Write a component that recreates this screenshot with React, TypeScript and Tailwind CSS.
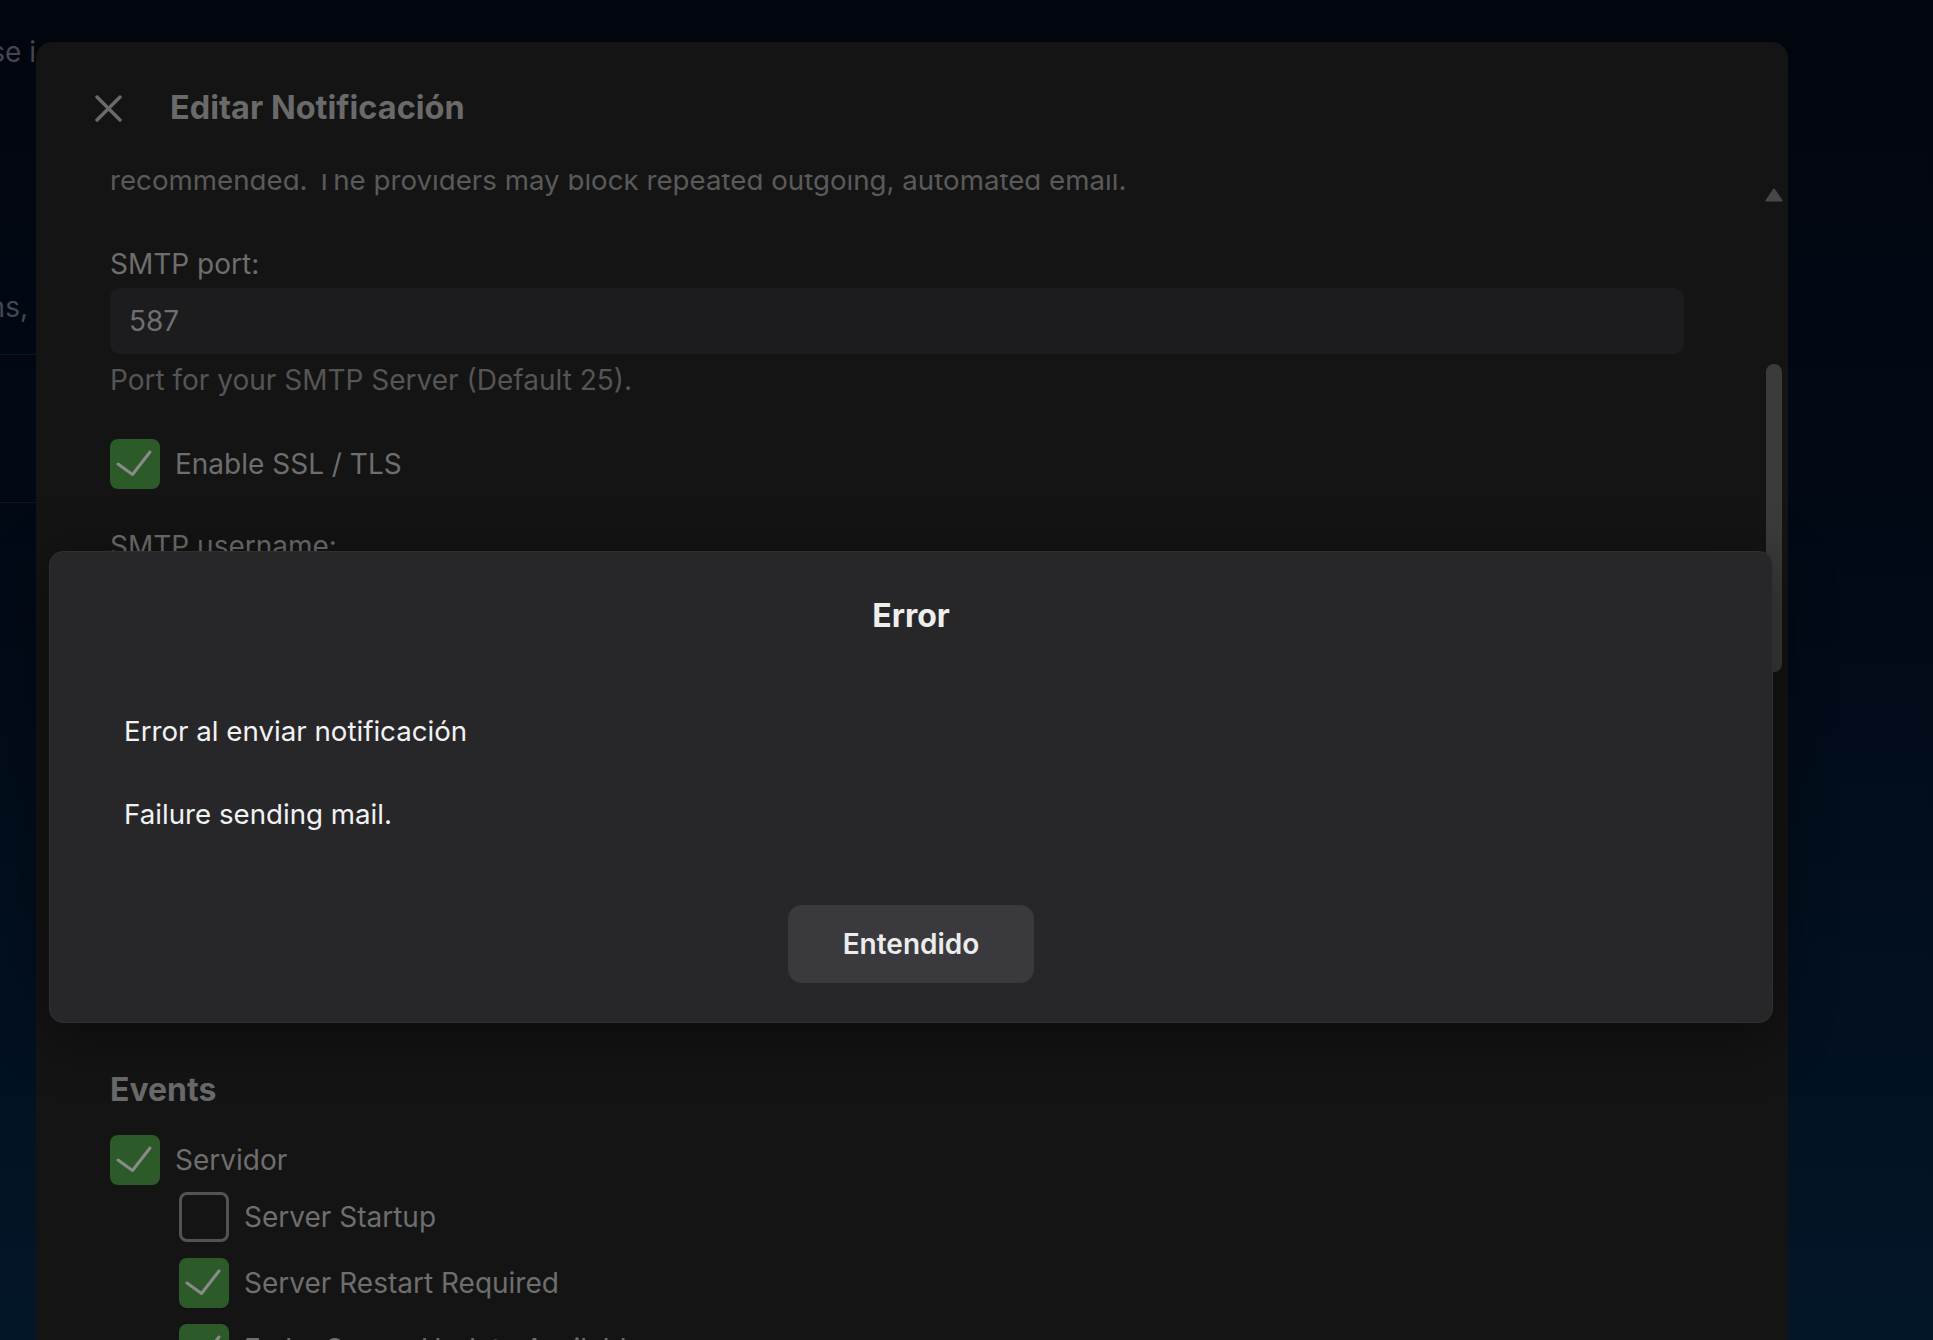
import React from "react";

function Check({ checked }: { checked: boolean }) {
  if (!checked) {
    return <div className="h-[50px] w-[50px] shrink-0 rounded-[8px] border-[3px] border-[#535353]" />;
  }
  return (
    <div className="flex h-[50px] w-[50px] shrink-0 items-center justify-center rounded-[8px] bg-[#2c5a29]">
      <svg width="50" height="50" viewBox="0 0 50 50" fill="none">
        <path d="M8 25 L22.5 35.5 L40 13" stroke="#8a8a8a" strokeWidth="3" strokeLinecap="round" strokeLinejoin="round" />
      </svg>
    </div>
  );
}

function Row({ checked, label }: { checked: boolean; label: string }) {
  return (
    <div className="flex items-center gap-[15px]">
      <Check checked={checked} />
      <span className="text-[28px] leading-[42px] text-[#6e6e6e]">{label}</span>
    </div>
  );
}

function Field({ label, value, help }: { label: string; value: string; help?: string }) {
  return (
    <div className="flex flex-col">
      <div className="text-[28px] leading-[42px] text-[#6e6e6e]">{label}</div>
      <div className="mt-[3px] flex h-[66px] items-center rounded-[10px] bg-[#1c1c1e] px-[19px] text-[28px] text-[#6f6f6f]">
        {value}
      </div>
      {help && <div className="mt-[5px] text-[28px] leading-[42px] text-[#555555]">{help}</div>}
    </div>
  );
}

export default function App() {
  return (
    <div className="relative h-[1340px] w-[1933px] overflow-hidden bg-[linear-gradient(180deg,#01050e_0%,#020a17_45%,#031628_100%)] font-['Inter',sans-serif]">
      {/* page behind the dialogs */}
      <div className="flex w-[36px] flex-col text-[28px] leading-[40px] text-[#44474e]">
        <div className="h-[32px]" />
        <div className="flex justify-end overflow-hidden whitespace-nowrap">To change them, please use i</div>
        <div className="h-[215px]" />
        <div className="flex justify-end overflow-hidden whitespace-nowrap pr-[8px]">server notifications,</div>
        <div className="h-[27px]" />
        <div className="h-px bg-[#0f141d]" />
        <div className="h-[147px]" />
        <div className="h-px bg-[#0f141d]" />
      </div>

      {/* main dialog */}
      <div className="absolute left-[36px] top-[42px] flex h-[1420px] w-[1752px] flex-col overflow-hidden rounded-[16px] bg-[#141414]">
        <div className="flex h-[132px] shrink-0 items-center gap-[48px] pl-[59px]">
          <svg width="27" height="27" viewBox="0 0 27 27" fill="none">
            <path d="M2 2 L25 25 M25 2 L2 25" stroke="#6a6a6a" strokeWidth="3.4" strokeLinecap="round" />
          </svg>
          <h1 className="text-[32.5px] font-bold leading-[44px] text-[#6a6a6a]">Editar Notificación</h1>
        </div>

        <div className="relative flex-1 overflow-hidden pl-[74px] pr-[104px]">
          <div className="-mt-[57px] flex flex-col">
            <div className="text-[27.7px] leading-[42px] text-[#5a5a5a]">
              <div>For Gmail, an app password is required. Other free email providers are not</div>
              <div>recommended. The providers may block repeated outgoing, automated email.</div>
            </div>
            <div className="mt-[42px]">
              <Field label="SMTP port:" value="587" help="Port for your SMTP Server (Default 25)." />
            </div>
            <div className="mt-[38px]">
              <Row checked label="Enable SSL / TLS" />
            </div>
            <div className="mt-[36px]">
              <Field label="SMTP username:" value="notificaciones@example.com" />
            </div>
            <div className="mt-[36px]">
              <Field label="SMTP password:" value="••••••••••" />
            </div>
            <div className="mt-[36px]">
              <Field label="From address:" value="jellyfin@example.com" />
            </div>
            <h2 className="mt-[138px] text-[32px] font-bold leading-[44px] text-[#6a6a6a]">Events</h2>
            <div className="mt-[23px] flex flex-col">
              <Row checked label="Servidor" />
              <div className="ml-[69px] mt-[7px] flex flex-col gap-[16px]">
                <Row checked={false} label="Server Startup" />
                <Row checked label="Server Restart Required" />
                <Row checked label="Emby Server Update Available" />
                <Row checked label="Plugin Update Installed" />
              </div>
            </div>
          </div>

          {/* scrollbar */}
          <div className="absolute right-[5px] top-[14px] flex w-[18px] flex-col items-center">
            <svg width="18" height="14" viewBox="0 0 18 14">
              <path d="M9 1.5 L16.5 12.5 L1.5 12.5 Z" fill="#474747" stroke="#474747" strokeWidth="2" strokeLinejoin="round" />
            </svg>
            <div className="mt-[162px] h-[308px] w-[16px] rounded-full bg-[#3b3b3b]" />
          </div>
        </div>
      </div>

      {/* error dialog */}
      <div className="absolute left-[49px] top-[551px] flex w-[1724px] flex-col rounded-[14px] border border-[#303033] bg-[#27272a] px-[74px] pb-[39px] pt-[42px] shadow-[0_12px_60px_rgba(0,0,0,0.45)]">
        <h2 className="text-center text-[32px] font-bold leading-[44px] text-[#eeeeee]">Error</h2>
        <p className="mt-[72px] text-[27.7px] leading-[42px] text-[#f2f2f2]">Error al enviar notificación</p>
        <p className="mt-[41px] text-[27.7px] leading-[42px] text-[#f2f2f2]">Failure sending mail.</p>
        <div className="mt-[70px] flex justify-center">
          <button className="h-[78px] w-[246px] rounded-[14px] bg-[#39393e] text-[28px] font-semibold text-[#ececec]">
            Entendido
          </button>
        </div>
      </div>
    </div>
  );
}
